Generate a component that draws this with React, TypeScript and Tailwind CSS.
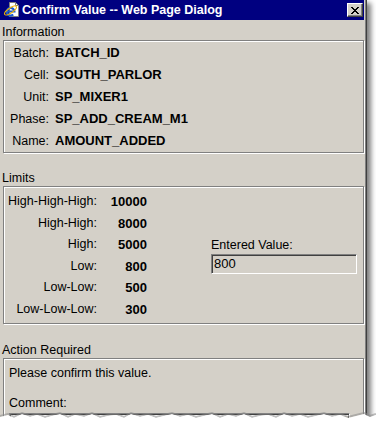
const info = [
  { label: "Batch:", value: "BATCH_ID" },
  { label: "Cell:", value: "SOUTH_PARLOR" },
  { label: "Unit:", value: "SP_MIXER1" },
  { label: "Phase:", value: "SP_ADD_CREAM_M1" },
  { label: "Name:", value: "AMOUNT_ADDED" },
];

const limits = [
  { label: "High-High-High:", value: "10000" },
  { label: "High-High:", value: "8000" },
  { label: "High:", value: "5000" },
  { label: "Low:", value: "800" },
  { label: "Low-Low:", value: "500" },
  { label: "Low-Low-Low:", value: "300" },
];

// torn paper edge at the bottom of the capture
const tear =
  "0,5 8,3 14,6 22,2 30,5 37,3 45,6 52,4 60,2 68,6 75,3 84,5 92,2 100,6 108,4 116,3 124,6 131,2 140,5 148,3 156,6 164,4 172,2 180,5 188,3 196,6 204,4 212,2 220,6 228,3 236,5 244,2 252,6 260,4 268,3 276,6 284,2 292,5 300,3 308,6 316,4 324,2 332,5 340,3 348,6 356,4 364,2 370,5 376,3";

function IeIcon() {
  return (
    <svg width="16" height="16" viewBox="0 0 16 16">
      <path d="M6.5 0.5h6l3 3v11h-9z" fill="#fff" stroke="#808080" />
      <path d="M12.5 0.5v3h3" fill="none" stroke="#808080" />
      <path
        d="M3.8 9.5h7.6a3.8 3.8 0 1 0 -1.2 3"
        fill="none"
        stroke="#1b5bd1"
        strokeWidth="2.2"
      />
      <ellipse
        cx="7.5"
        cy="8.5"
        rx="7"
        ry="2.4"
        transform="rotate(-35 7.5 8.5)"
        fill="none"
        stroke="#f2b400"
        strokeWidth="1.1"
      />
    </svg>
  );
}

function CloseGlyph() {
  return (
    <svg width="8" height="7" viewBox="0 0 8 7" shapeRendering="crispEdges">
      <path d="M0 0h2v1H0zM6 0h2v1H6zM1 1h2v1H1zM5 1h2v1H5zM2 2h4v1H2zM3 3h2v1H3zM2 4h4v1H2zM1 5h2v1H1zM5 5h2v1H5zM0 6h2v1H0zM6 6h2v1H6z" />
    </svg>
  );
}

function GroupBox({ className, children }: { className: string; children: React.ReactNode }) {
  return (
    <div
      className={`ml-[3px] w-[361px] border border-[#808080] shadow-[inset_1px_1px_0_#fff,1px_1px_0_#fff] ${className}`}
    >
      {children}
    </div>
  );
}

export default function App() {
  return (
    <div className="relative h-[425px] w-[376px] overflow-hidden bg-white font-['Liberation_Sans',Arial,sans-serif] text-[12.5px] text-black">
      <div className="h-[440px] w-[367px] border-r border-r-[#404040] bg-[#d4d0c8] shadow-[inset_-1px_0_0_#808080,4px_3px_5px_rgba(0,0,0,0.5)]">
        <div className="flex h-[20px] w-[364px] items-center bg-[#000080] pl-[3px] pr-[1px]">
          <IeIcon />
          <span className="ml-[3px] text-[12.5px] font-bold text-white">
            Confirm Value -- Web Page Dialog
          </span>
          <button className="ml-auto flex h-[14px] w-[16px] items-center justify-center border border-t-white border-l-white border-r-[#404040] border-b-[#404040] bg-[#d4d0c8] shadow-[inset_-1px_-1px_0_#808080]">
            <CloseGlyph />
          </button>
        </div>

        <div className="mt-[4px] h-[16px] pl-[2px] leading-[16px]">Information</div>
        <GroupBox className="h-[113px] pt-[1px]">
          {info.map((row) => (
            <div key={row.label} className="flex h-[22px] leading-[22px]">
              <span className="w-[45px] text-right">{row.label}</span>
              <span className="ml-[6px] text-[13px] font-bold">{row.value}</span>
            </div>
          ))}
        </GroupBox>

        <div className="mt-[17px] h-[16px] pl-[2px] leading-[16px]">Limits</div>
        <GroupBox className="flex h-[138px] pt-[4px]">
          <div>
            {limits.map((row) => (
              <div key={row.label} className="flex h-[21.5px] leading-[21.5px]">
                <span className="w-[93px] text-right">{row.label}</span>
                <span className="w-[50px] text-right text-[13px] font-bold">{row.value}</span>
              </div>
            ))}
          </div>
          <div className="ml-[64px] flex flex-col justify-center pb-[4px]">
            <div className="h-[16px] leading-[16px]">Entered Value:</div>
            <div className="mt-[1px] flex h-[20px] w-[146px] items-center border border-t-[#808080] border-l-[#808080] border-r-white border-b-white bg-[#d4d0c8] pl-[2px] text-[13px] shadow-[inset_1px_1px_0_#404040]">
              800
            </div>
          </div>
        </GroupBox>

        <div className="mt-[18px] h-[16px] pl-[2px] leading-[16px]">Action Required</div>
        <GroupBox className="h-[80px] pl-[5px] pt-[3px]">
          <div className="h-[22px] leading-[22px]">Please confirm this value.</div>
          <div className="mt-[9px] h-[20px] leading-[20px]">Comment:</div>
          <div className="flex h-[40px] w-[341px] border border-t-[#808080] border-l-[#808080] border-r-white border-b-white bg-white shadow-[inset_1px_1px_0_#404040]">
            <div className="ml-auto mt-[1px] h-[16px] w-[15px] border border-t-white border-l-white border-r-[#404040] border-b-[#404040] bg-[#d4d0c8]" />
          </div>
        </GroupBox>
      </div>

      <svg
        className="absolute left-0 top-[412px]"
        width="376"
        height="14"
        viewBox="0 0 376 14"
      >
        <polyline points={tear} fill="none" stroke="#8a8a8a" strokeWidth="2" opacity="0.55" transform="translate(0 -1)" />
        <polygon points={`${tear} 376,14 0,14`} fill="#fff" />
      </svg>
    </div>
  );
}
